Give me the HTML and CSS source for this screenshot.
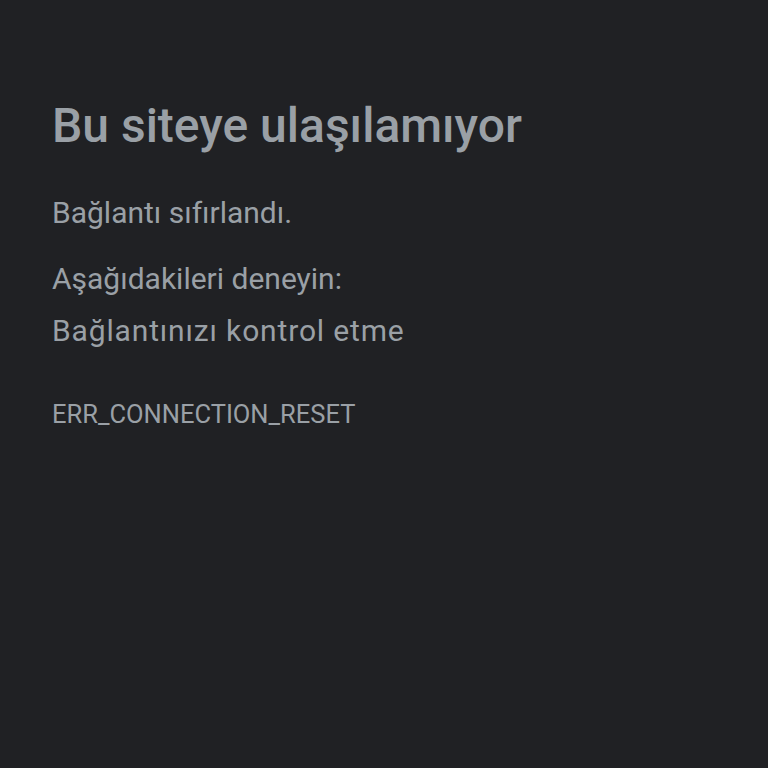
FILE: index.html
```html
<!DOCTYPE html>
<html lang="tr">
  <head>
    <meta charset="UTF-8" />
    <meta name="viewport" content="width=device-width, initial-scale=1.0" />
    <title>Bu siteye ulaşılamıyor</title>
    <link rel="stylesheet" href="styles.css">
  </head>
  <body>
    <main class="error">
      <h1 class="error__title">Bu siteye ulaşılamıyor</h1>
      <p class="error__summary">Bağlantı sıfırlandı.</p>
      <div class="error__suggest">
        <p>Aşağıdakileri deneyin:</p>
        <ul class="suggest__list">
          <li>Bağlantınızı kontrol etme</li>
        </ul>
      </div>
      <div class="error__code">ERR_CONNECTION_RESET</div>
    </main>
  </body>
</html>
```

FILE: styles.css
```css
* {
  margin: 0;
  padding: 0;
  box-sizing: border-box;
  font-family: Roboto, "Noto Sans", sans-serif;
}
html, body {
  height: 100%;
}
body {
  background-color: #202124;
  color: #9aa0a6;
}
.error {
  padding: 98px 52px 0;
}
.error__title {
  font-size: 48px;
  font-weight: 500;
  line-height: 56px;
  color: #9aa0a6;
}
.error__summary {
  font-size: 30px;
  line-height: 40px;
  margin-top: 39px;
}
.error__suggest {
  margin-top: 20px;
  font-size: 30px;
  line-height: 52px;
}
.suggest__list {
  list-style: none;
  letter-spacing: 0.85px;
}
.error__code {
  margin-top: 41px;
  font-size: 25.5px;
  line-height: 32px;
}
```
